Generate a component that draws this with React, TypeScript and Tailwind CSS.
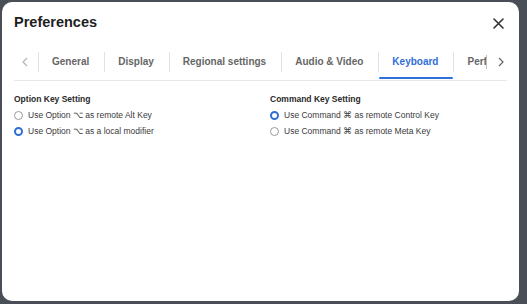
import React from "react";

function Radio({ checked }: { checked: boolean }) {
  return checked ? (
    <span className="w-[9px] h-[9px] rounded-full border-[2.5px] border-[#2f6fd6] bg-white shrink-0" />
  ) : (
    <span className="w-[9px] h-[9px] rounded-full border border-[#9a9a9a] bg-white shrink-0" />
  );
}

function Option({ checked, label }: { checked: boolean; label: string }) {
  return (
    <div className="flex items-center gap-[5px] h-[16px]">
      <Radio checked={checked} />
      <span className="text-[8.5px] text-[#3a3a3a]">{label}</span>
    </div>
  );
}

function Divider() {
  return <span className="w-px h-[20px] bg-[#e3e3e3]" />;
}

export default function App() {
  const tabs = ["General", "Display", "Regional settings", "Audio & Video"];
  return (
    <div
      className="w-[527px] h-[304px] bg-[#4a4f57] pt-[2px] pl-[2px] pr-[8px] pb-[3px]"
      style={{ fontFamily: '"Liberation Sans", Arial, sans-serif' }}
    >
      <div className="w-full h-full bg-white rounded-[10px] flex flex-col">
        <div className="flex items-center justify-between pl-[12px] pr-[15px] h-[41px] pt-[1px]">
          <span className="text-[14.5px] font-bold text-[#1e1e1e]">Preferences</span>
          <svg width="11" height="11" viewBox="0 0 11 11" className="mt-[1px]">
            <path d="M1 1 L10 10 M10 1 L1 10" stroke="#333" strokeWidth="1.6" strokeLinecap="round" />
          </svg>
        </div>
        <div className="mx-[12px] h-[38px] flex items-stretch border-b border-[#e8e8e8]">
          <div className="flex items-center pl-[8px] pr-[10px]">
            <svg width="6" height="10" viewBox="0 0 6 10">
              <path d="M5 1 L1 5 L5 9" fill="none" stroke="#b5b5b5" strokeWidth="1.2" />
            </svg>
          </div>
          <div className="flex items-center">
            <Divider />
          </div>
          {tabs.map((t) => (
            <React.Fragment key={t}>
              <div className="flex items-center pl-[13px] pr-[15px] text-[10px] font-semibold text-[#666]">{t}</div>
              <div className="flex items-center">
                <Divider />
              </div>
            </React.Fragment>
          ))}
          <div className="relative flex items-center pl-[13px] pr-[15px] text-[10px] font-semibold text-[#2f6fd6]">
            Keyboard
            <span className="absolute left-0 right-0 bottom-[1px] h-[2px] bg-[#2f6fd6] rounded-full" />
          </div>
          <div className="flex items-center">
            <Divider />
          </div>
          <div className="flex items-center pl-[13px] text-[10px] font-semibold text-[#666]">
            <span className="w-[19px] overflow-hidden whitespace-nowrap">Perf</span>
            <span className="w-px h-[14px] bg-[#bdbdbd]" />
          </div>
          <div className="flex items-center pl-[11px]">
            <svg width="6" height="10" viewBox="0 0 6 10">
              <path d="M1 1 L5 5 L1 9" fill="none" stroke="#666" strokeWidth="1.2" />
            </svg>
          </div>
        </div>
        <div className="flex pl-[12px] pt-[12px]">
          <div className="w-[256px] flex flex-col">
            <div className="text-[8.5px] font-bold text-[#2a2a2a] mb-[2px]">Option Key Setting</div>
            <Option checked={false} label="Use Option ⌥ as remote Alt Key" />
            <Option checked={true} label="Use Option ⌥ as a local modifier" />
          </div>
          <div className="flex flex-col">
            <div className="text-[8.5px] font-bold text-[#2a2a2a] mb-[2px]">Command Key Setting</div>
            <Option checked={true} label="Use Command ⌘ as remote Control Key" />
            <Option checked={false} label="Use Command ⌘ as remote Meta Key" />
          </div>
        </div>
      </div>
    </div>
  );
}
